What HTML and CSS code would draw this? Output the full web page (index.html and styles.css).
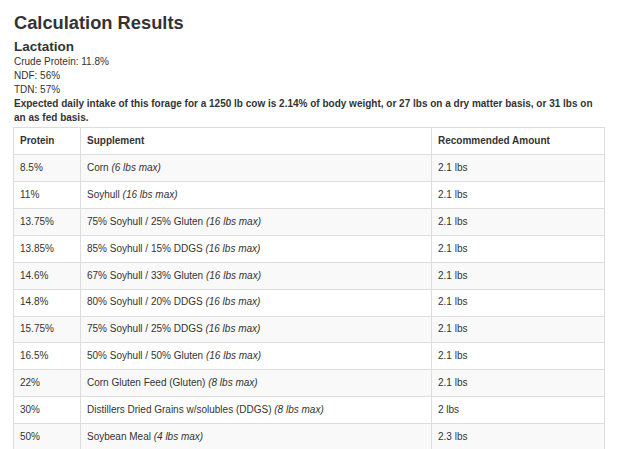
FILE: index.html
```html
<!DOCTYPE html>
<html>
<head>
<meta charset="utf-8">
<link rel="stylesheet" href="styles.css">
</head>
<body>
<div class="page">
  <h2 class="title">Calculation Results</h2>
  <h3 class="subtitle">Lactation</h3>
  <div class="facts">
    <div>Crude Protein: 11.8%</div>
    <div>NDF: 56%</div>
    <div>TDN: 57%</div>
    <div class="strong">Expected daily intake of this forage for a 1250 lb cow is 2.14% of body weight, or 27 lbs on a dry matter basis, or 31 lbs on an as fed basis.</div>
  </div>
  <table class="results">
    <colgroup>
      <col class="c-protein">
      <col class="c-supp">
      <col class="c-amt">
    </colgroup>
    <thead>
      <tr><th>Protein</th><th>Supplement</th><th>Recommended Amount</th></tr>
    </thead>
    <tbody>
      <tr><td>8.5%</td><td>Corn <em>(6 lbs max)</em></td><td>2.1 lbs</td></tr>
      <tr><td>11%</td><td>Soyhull <em>(16 lbs max)</em></td><td>2.1 lbs</td></tr>
      <tr><td>13.75%</td><td>75% Soyhull / 25% Gluten <em>(16 lbs max)</em></td><td>2.1 lbs</td></tr>
      <tr><td>13.85%</td><td>85% Soyhull / 15% DDGS <em>(16 lbs max)</em></td><td>2.1 lbs</td></tr>
      <tr><td>14.6%</td><td>67% Soyhull / 33% Gluten <em>(16 lbs max)</em></td><td>2.1 lbs</td></tr>
      <tr><td>14.8%</td><td>80% Soyhull / 20% DDGS <em>(16 lbs max)</em></td><td>2.1 lbs</td></tr>
      <tr><td>15.75%</td><td>75% Soyhull / 25% DDGS <em>(16 lbs max)</em></td><td>2.1 lbs</td></tr>
      <tr><td>16.5%</td><td>50% Soyhull / 50% Gluten <em>(16 lbs max)</em></td><td>2.1 lbs</td></tr>
      <tr><td>22%</td><td>Corn Gluten Feed (Gluten) <em>(8 lbs max)</em></td><td>2.1 lbs</td></tr>
      <tr><td>30%</td><td>Distillers Dried Grains w/solubles (DDGS) <em>(8 lbs max)</em></td><td>2 lbs</td></tr>
      <tr><td>50%</td><td>Soybean Meal <em>(4 lbs max)</em></td><td>2.3 lbs</td></tr>
    </tbody>
  </table>
</div>
</body>
</html>
```

FILE: styles.css
```css
html, body {
  margin: 0;
  padding: 0;
  background: #fff;
}
body {
  font-family: "Liberation Sans", Arial, Helvetica, sans-serif;
  font-size: 10px;
  line-height: 14px;
  color: #333;
}
.page {
  padding: 11.6px 13px 0 13px;
}
.title {
  font-size: 18.3px;
  line-height: 22px;
  font-weight: bold;
  margin: 0 0 5.2px 1px;
  color: #333;
}
.subtitle {
  font-size: 13.5px;
  line-height: 16px;
  font-weight: bold;
  margin: 0 0 0.45px 1px;
  color: #333;
}
.facts {
  padding-left: 1px;
  margin-bottom: 2px;
}
.strong {
  font-weight: bold;
}
.results {
  border-collapse: collapse;
  border-spacing: 0;
  width: 591px;
  table-layout: fixed;
  border: 1px solid #ddd;
}
.c-protein { width: 67px; }
.c-supp { width: 351px; }
.c-amt { width: 173px; }
.results th,
.results td {
  border: 1px solid #ddd;
  padding: 5.76px 6px;
  line-height: 14.4px;
  text-align: left;
  vertical-align: top;
  white-space: nowrap;
}
.results th {
  font-weight: bold;
  border-bottom: 1.5px solid #ddd;
}
.results tbody tr:nth-child(odd) {
  background: #f9f9f9;
}
.results em {
  font-style: italic;
}
```
